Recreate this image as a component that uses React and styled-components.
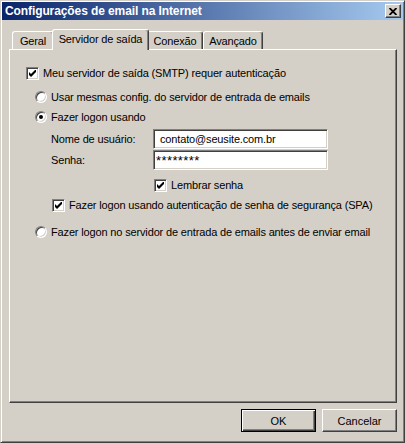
import styled, { createGlobalStyle } from 'styled-components';

const GlobalStyle = createGlobalStyle`
  html, body {
    margin: 0;
    padding: 0;
    background: #d4d0c8;
  }
  body {
    font-family: "Liberation Sans", Arial, sans-serif;
    font-size: 11px;
    letter-spacing: -0.15px;
    color: #000;
  }
`;

const Window = styled.div`
  box-sizing: border-box;
  width: 405px;
  height: 443px;
  display: flex;
  flex-direction: column;
  padding: 1px;
  background: #d4d0c8;
  border: 1px solid;
  border-color: #d4d0c8 #404040 #404040 #d4d0c8;
  box-shadow: inset 1px 1px #fff, inset -1px -1px #808080;
`;

const TitleBar = styled.div`
  height: 18px;
  display: flex;
  align-items: center;
  justify-content: space-between;
  padding: 0 2px 0 3px;
  background: linear-gradient(to right, #0a246a, #a6caf0);
`;

const TitleText = styled.span`
  color: #fff;
  font-weight: bold;
  font-size: 12px;
  letter-spacing: -0.1px;
  white-space: nowrap;
`;

const CloseButton = styled.div`
  box-sizing: border-box;
  width: 16px;
  height: 14px;
  display: flex;
  align-items: center;
  justify-content: center;
  background: #d4d0c8;
  border: 1px solid;
  border-color: #fff #404040 #404040 #fff;
  box-shadow: inset -1px -1px #808080;
`;

const Body = styled.div`
  flex: 1;
  display: flex;
  flex-direction: column;
  padding: 9px 6px 9px 7px;
`;

const TabStrip = styled.div`
  height: 20px;
  display: flex;
  align-items: flex-end;
  padding-left: 3px;
  position: relative;
  z-index: 1;
`;

const Tab = styled.div`
  box-sizing: border-box;
  width: ${p => p.$w}px;
  height: ${p => (p.$active ? 21 : 18)}px;
  margin: ${p => (p.$active ? '0 -2px -1px' : '0')};
  position: relative;
  z-index: ${p => (p.$active ? 2 : 1)};
  display: flex;
  justify-content: center;
  padding-top: 3px;
  background: #d4d0c8;
  border-top: 1px solid #fff;
  border-left: 1px solid #fff;
  border-right: 1px solid #404040;
  border-radius: 3px 3px 0 0;
  box-shadow: inset -1px 0 #808080;
  white-space: nowrap;
`;

const Panel = styled.div`
  flex: 1;
  display: flex;
  flex-direction: column;
  padding: 15px 0 0 16px;
  border: 1px solid;
  border-color: #fff #404040 #404040 #fff;
  box-shadow: inset -1px -1px #808080;
`;

const Row = styled.div`
  display: flex;
  align-items: center;
  height: ${p => p.$h || 16}px;
  margin-top: ${p => p.$mt || 0}px;
  margin-left: ${p => p.$indent || 0}px;
  gap: 4px;
  white-space: nowrap;
`;

const CheckBox = styled.span`
  box-sizing: border-box;
  width: 13px;
  height: 13px;
  flex: none;
  display: flex;
  align-items: center;
  justify-content: center;
  background: #fff;
  border: 1px solid;
  border-color: #808080 #fff #fff #808080;
  box-shadow: inset 1px 1px #404040, inset -1px -1px #d4d0c8;
`;

const Radio = styled.span`
  box-sizing: border-box;
  width: 12px;
  height: 12px;
  flex: none;
  display: flex;
  align-items: center;
  justify-content: center;
  border-radius: 50%;
  background: #fff;
  border: 1px solid;
  border-color: #808080 #fff #fff #808080;
  box-shadow: inset 1px 1px #404040, inset -1px -1px #d4d0c8;

  &::after {
    content: '';
    display: ${p => (p.$checked ? 'block' : 'none')};
    width: 4px;
    height: 4px;
    border-radius: 50%;
    background: #000;
  }
`;

const FieldLabel = styled.span`
  width: 98px;
  flex: none;
`;

const Field = styled.input`
  box-sizing: border-box;
  width: 175px;
  height: 20px;
  margin: 0;
  padding: 0 0 0 ${p => p.$pad}px;
  font: inherit;
  font-size: ${p => p.$size || 11}px;
  letter-spacing: ${p => (p.$size ? '0.4px' : '-0.15px')};
  color: #000;
  background: #fff;
  outline: none;
  border: 1px solid;
  border-color: #808080 #fff #fff #808080;
  box-shadow: inset 1px 1px #404040, inset -1px -1px #d4d0c8;
`;

const ButtonRow = styled.div`
  display: flex;
  justify-content: flex-end;
  gap: 6px;
  margin-top: 6px;
`;

const Button = styled.button`
  box-sizing: border-box;
  width: 75px;
  height: 23px;
  margin: 0;
  padding: 0;
  font: inherit;
  color: #000;
  background: #d4d0c8;
  border: 1px solid;
  border-color: ${p => (p.$default ? '#000' : '#fff #404040 #404040 #fff')};
  box-shadow: ${p =>
    p.$default
      ? 'inset 1px 1px #fff, inset -1px -1px #404040, inset -2px -2px #808080'
      : 'inset -1px -1px #808080'};
`;

const Check = () => (
  <svg width="7" height="7" viewBox="0 0 7 7">
    <path d="M0 2 L2 4 L7 -1 V2 L2 7 L0 5 Z" fill="#000" />
  </svg>
);

const CloseGlyph = () => (
  <svg width="8" height="7" viewBox="0 0 8 7">
    <path d="M0.5 0 L7.5 7 M7.5 0 L0.5 7" stroke="#000" strokeWidth="1.8" />
  </svg>
);

const tabs = [
  { label: 'Geral', w: 42 },
  { label: 'Servidor de saída', w: 97, active: true },
  { label: 'Conexão', w: 56 },
  { label: 'Avançado', w: 60 },
];

export default function App() {
  return (
    <>
      <GlobalStyle />
      <Window>
        <TitleBar>
          <TitleText>Configurações de email na Internet</TitleText>
          <CloseButton>
            <CloseGlyph />
          </CloseButton>
        </TitleBar>
        <Body>
          <TabStrip>
            {tabs.map(t => (
              <Tab key={t.label} $w={t.w} $active={t.active}>
                {t.label}
              </Tab>
            ))}
          </TabStrip>
          <Panel>
            <Row>
              <CheckBox><Check /></CheckBox>
              Meu servidor de saída (SMTP) requer autenticação
            </Row>
            <Row $mt={8} $indent={9}>
              <Radio />
              Usar mesmas config. do servidor de entrada de emails
            </Row>
            <Row $mt={4} $indent={9}>
              <Radio $checked />
              Fazer logon usando
            </Row>
            <Row $mt={4} $indent={25} $h={20}>
              <FieldLabel>Nome de usuário:</FieldLabel>
              <Field readOnly defaultValue="contato@seusite.com.br" $pad={6} />
            </Row>
            <Row $mt={1} $indent={25} $h={20}>
              <FieldLabel>Senha:</FieldLabel>
              <Field readOnly defaultValue="********" $pad={2} $size={13} />
            </Row>
            <Row $mt={7} $indent={128}>
              <CheckBox><Check /></CheckBox>
              Lembrar senha
            </Row>
            <Row $mt={4} $indent={26}>
              <CheckBox><Check /></CheckBox>
              Fazer logon usando autenticação de senha de segurança (SPA)
            </Row>
            <Row $mt={11} $indent={9}>
              <Radio />
              Fazer logon no servidor de entrada de emails antes de enviar email
            </Row>
          </Panel>
          <ButtonRow>
            <Button $default>OK</Button>
            <Button>Cancelar</Button>
          </ButtonRow>
        </Body>
      </Window>
    </>
  );
}
